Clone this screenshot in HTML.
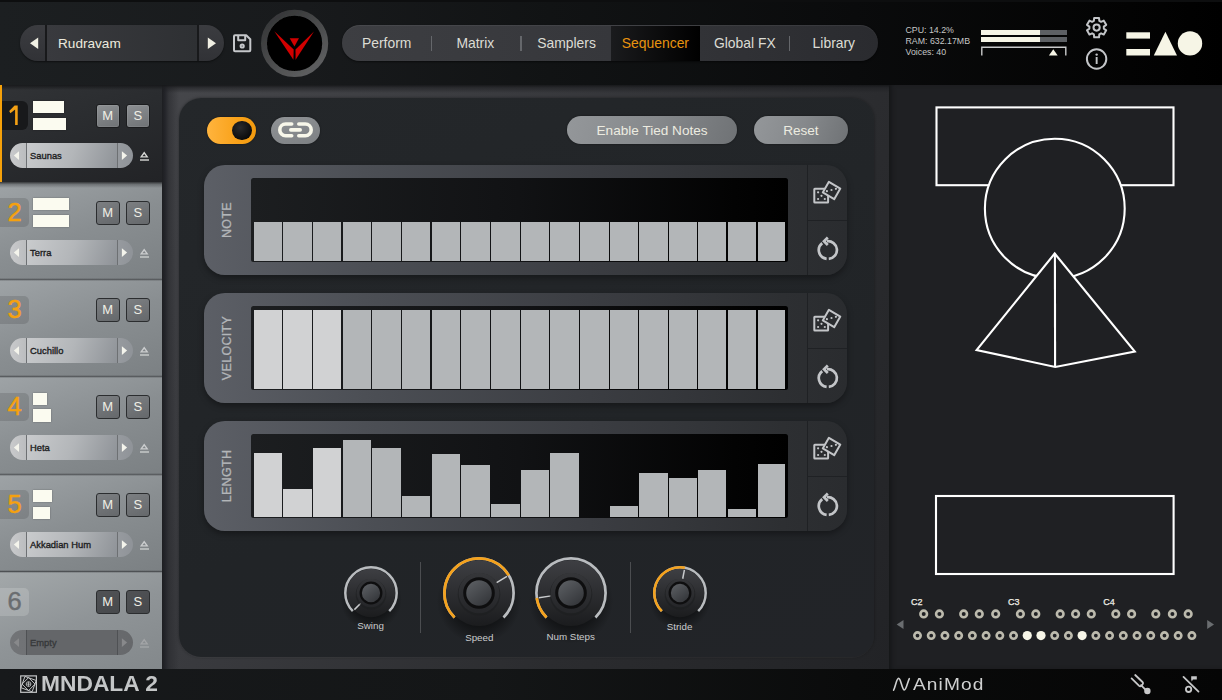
<!DOCTYPE html>
<html><head><meta charset="utf-8">
<style>
*{margin:0;padding:0;box-sizing:border-box}
html,body{width:1222px;height:700px;overflow:hidden;background:#111214;font-family:"Liberation Sans",sans-serif}
.a{position:absolute}
#hdr{left:0;top:0;width:1222px;height:85px;background:linear-gradient(90deg,#1c1f21 0%,#181a1c 25%,#111314 45%,#0a0b0c 70%,#040404 90%,#000 100%);border-top:2px solid #0d0e0f}
#side{left:0;top:85px;width:162px;height:584px;background:#8a8d90}
#sidesep{left:162px;top:85px;width:17px;height:584px;background:linear-gradient(90deg,#1d1e21 0%,#24252a 18%,rgba(40,41,45,.6) 40%,rgba(60,61,66,0) 100%)}
#main{left:162px;top:85px;width:727px;height:584px;background:linear-gradient(120deg,#46474b 0%,#3a3b3f 32%,#2b2c2f 68%,#222326 100%)}
#inner{left:179px;top:97.8px;width:694.8px;height:559.3px;border-radius:22px;background:linear-gradient(160deg,#24272a 0%,#212427 60%,#222428 100%);box-shadow:0 0 3px rgba(0,0,0,.4),0 1px 0 rgba(255,255,255,.05)}
#right{left:889px;top:85px;width:333px;height:584px;background:#1f2023;box-shadow:inset 4px 0 5px -2px #141517}
#foot{left:0;top:669px;width:1222px;height:31px;background:linear-gradient(90deg,#17191b 0%,#141617 40%,#0a0b0b 70%,#050505 100%)}
.nav{top:33px;height:20px;line-height:20px;font-size:13.9px;color:#dcdcd4;white-space:nowrap}
.stat{height:12px;line-height:12px;font-size:8.8px;color:#c6c7c6;white-space:nowrap}

.num{font-size:25.5px;line-height:30px;height:30px;-webkit-text-stroke:0.45px currentColor}
.cb{background:#fbfbf0;box-shadow:0 0 1.5px rgba(0,0,0,.35)}
.msb{width:24.5px;height:24px;border-radius:3px;color:#efefe6;font-size:13px;line-height:21px;text-align:center}
.pb{height:28.3px;border-radius:14px;background:linear-gradient(110deg,#94979a 0%,#86898c 50%,#6f7275 100%);box-shadow:0 0 2px rgba(0,0,0,.5);color:#ecebe0;font-size:13.6px;line-height:30px;text-align:center;white-space:nowrap}
.rowp{left:203.6px;width:643.2px;height:110px;border-radius:21px;background:linear-gradient(90deg,#5c5f66 0%,#4c4f55 25%,#3b3d42 60%,#2d2f32 90%,#2a2c2f 100%);box-shadow:0 3px 6px rgba(0,0,0,.35)}
.disp{left:250.7px;width:537.2px;height:83.5px;border-radius:2.5px;background:linear-gradient(90deg,#1c1e20 0%,#111214 50%,#030303 90%,#000 100%)}
.rl{height:14px;line-height:14px;text-align:center;font-size:12.5px;color:#b3b6b9;transform:rotate(-90deg);letter-spacing:.3px;-webkit-text-stroke:0.3px currentColor}
.kl{height:14px;line-height:14px;text-align:center;font-size:9.8px;color:#c9cbcc;white-space:nowrap}
.kb{height:12px;line-height:12px;font-size:9px;color:#f0efe6;-webkit-text-stroke:0.25px currentColor}
.pt{font-size:9.4px;line-height:13px;height:13px;white-space:nowrap;-webkit-text-stroke:0.35px currentColor}
</style></head><body>
<div id="hdr" class="a"></div>
<!-- preset pill -->
<div class="a" style="left:20px;top:25px;width:204px;height:36px;border-radius:18px;background:linear-gradient(180deg,#3b3c40 0%,#313236 100%);box-shadow:0 1px 2px rgba(0,0,0,.5)"></div>
<div class="a" style="left:45px;top:25px;width:2px;height:36px;background:#18191b"></div>
<div class="a" style="left:197px;top:25px;width:2px;height:36px;background:#18191b"></div>
<div class="a" style="left:47px;top:25px;width:150px;height:36px;background:linear-gradient(90deg,#393a3e,#2e3033)"></div>
<svg class="a" style="left:0;top:0" width="340" height="85"><polygon points="30,43.3 38.2,37.5 38.2,49" fill="#f0efe3"/><polygon points="216,43.3 207.8,37.5 207.8,49" fill="#f0efe3"/>
<g fill="none" stroke="#c5c7ca" stroke-width="2" stroke-linejoin="round"><path d="M235,35.2 H246.2 L250.3,39.3 V50.2 Q250.3,51.2 249.3,51.2 H235 Q234,51.2 234,50.2 V36.2 Q234,35.2 235,35.2 Z"/><path d="M238.2,35.2 V40.2 H245.2 V35.2"/><circle cx="242.2" cy="46" r="1.6"/></g>
<defs><linearGradient id="lgr" x1="0.2" y1="0.1" x2="0.8" y2="0.9"><stop offset="0" stop-color="#38393a"/><stop offset="1" stop-color="#5c5d5e"/></linearGradient><filter id="lbl" x="-20%" y="-20%" width="140%" height="140%"><feGaussianBlur stdDeviation="0.6"/></filter></defs><circle cx="294.6" cy="43.4" r="30.6" fill="#000" stroke="url(#lgr)" stroke-width="6" filter="url(#lbl)"/>
<polygon points="274.3,31.3 293.7,49.5 293.4,59.8" fill="#d20000"/><polygon points="314,31.5 295.5,49.5 295.6,59.8" fill="#d20000"/><polygon points="289.7,38.2 299,38.2 294.4,46.4" fill="#d20000"/>
</svg>
<div class="a" style="left:58px;top:34px;height:20px;line-height:20px;font-size:13.6px;color:#eceade">Rudravam</div>
<!-- nav -->
<div class="a" style="left:342px;top:25px;width:536px;height:35.5px;border-radius:18px;background:linear-gradient(90deg,#3d3e42 0%,#36373b 50%,#2a2b2f 100%);box-shadow:0 1px 2px rgba(0,0,0,.5), inset 0 1px 0 rgba(255,255,255,.06)"></div>
<div class="a" style="left:610.5px;top:26px;width:89.5px;height:34.5px;background:linear-gradient(90deg,#1a1b1d 0%,#0a0a0b 60%,#000 100%)"></div>
<div class="a" style="left:430.9px;top:35.5px;width:1.2px;height:15.5px;background:#65676b"></div>
<div class="a" style="left:520.4px;top:35.5px;width:1.2px;height:15.5px;background:#65676b"></div>
<div class="a" style="left:788.6px;top:35.5px;width:1.2px;height:15.5px;background:#65676b"></div>
<div class="a nav" style="left:362px">Perform</div>
<div class="a nav" style="left:456.4px">Matrix</div>
<div class="a nav" style="left:537.2px">Samplers</div>
<div class="a nav" style="left:621.8px;color:#e8930f">Sequencer</div>
<div class="a nav" style="left:713.9px">Global FX</div>
<div class="a nav" style="left:812.6px">Library</div>
<!-- stats -->
<div class="a stat" style="left:905.5px;top:24px">CPU: 14.2%</div>
<div class="a stat" style="left:905.5px;top:35px">RAM: 632.17MB</div>
<div class="a stat" style="left:905.5px;top:46px">Voices: 40</div>
<div class="a" style="left:981px;top:29.7px;width:59px;height:5.2px;background:#f6f5e6"></div>
<div class="a" style="left:1040px;top:29.7px;width:26.6px;height:5.2px;background:#5d6064"></div>
<div class="a" style="left:981px;top:37.1px;width:59px;height:5.1px;background:#f6f5e6"></div>
<div class="a" style="left:1040px;top:37.1px;width:26.6px;height:5.1px;background:#5d6064"></div>
<svg class="a" style="left:970px;top:40px" width="110" height="20"><path d="M11.8,15.5 V7.3 H95.8 V15.5" fill="none" stroke="#c9cacb" stroke-width="1.4"/><polygon points="78.9,15.5 83.3,9.2 87.7,15.5" fill="#f6f5e6"/></svg>
<svg class="a" style="left:1080px;top:10px" width="142" height="70">
<g fill="none" stroke="#c3c5c8" stroke-width="2"><circle cx="16.6" cy="49" r="9.7"/></g>
<rect x="15.7" y="47" width="1.9" height="7" fill="#c3c5c8"/><circle cx="16.65" cy="44.6" r="1.2" fill="#c3c5c8"/>
<circle cx="16.6" cy="17.6" r="3.1" fill="none" stroke="#c3c5c8" stroke-width="2"/><path id="gear" d="M13.87,10.83 L14.18,7.90 L19.02,7.90 L19.33,10.83 L21.09,11.85 L23.79,10.65 L26.21,14.84 L23.83,16.58 L23.83,18.62 L26.21,20.36 L23.79,24.55 L21.09,23.35 L19.33,24.37 L19.02,27.30 L14.18,27.30 L13.87,24.37 L12.11,23.35 L9.41,24.55 L6.99,20.36 L9.37,18.62 L9.37,16.58 L6.99,14.84 L9.41,10.65 L12.11,11.85Z" stroke-linejoin="round" fill="none" stroke="#c3c5c8" stroke-width="2"/>
<rect x="46.3" y="22.3" width="23.7" height="6.3" fill="#f6f5e6"/><rect x="46.3" y="39" width="23.7" height="6.5" fill="#f6f5e6"/>
<polygon points="73.8,45.5 85.4,21.8 97,45.5" fill="#f6f5e6"/><circle cx="110" cy="33.4" r="12.2" fill="#f6f5e6"/>
</svg>


<div class="a" style="left:0;top:85.0px;width:162px;height:97.30000000000001px;background:linear-gradient(160deg,#313336 0%,#2a2c2f 45%,#222326 100%)"></div>
<div class="a" style="left:0;top:85.0px;width:2.1px;height:97.30000000000001px;background:#f6a10a"></div>
<div class="a" style="left:2.1px;top:101.0px;width:26.4px;height:29px;border-radius:0 6px 6px 0;background:#18191b"></div>
<svg class="a" style="left:0;top:85.0px" width="30" height="50"><polygon points="14.6,20.5 17.7,20.5 17.7,40 15.1,40 15.1,24.6 10.4,28.2 9.2,26.1" fill="#f4a114"/></svg>
<div class="a cb" style="left:33px;top:101.0px;width:31px;height:12px"></div>
<div class="a cb" style="left:33px;top:117.5px;width:32.6px;height:12.5px"></div>
<div class="a msb" style="left:95.5px;top:103.5px;border:1.4px solid #1b1c1e;background:linear-gradient(160deg,#8d9093,#6f7275);box-shadow:inset 0 0 0 1px rgba(255,255,255,.08);">M</div>
<div class="a msb" style="left:125.5px;top:103.5px;border:1.4px solid #1b1c1e;background:linear-gradient(160deg,#8d9093,#6f7275);box-shadow:inset 0 0 0 1px rgba(255,255,255,.08);">S</div>
<div class="a" style="left:10px;top:143.0px;width:123.4px;height:25px;border-radius:12.5px;background:linear-gradient(90deg,#c9cacc 0%,#bcbec0 12%,#aeb1b4 50%,#8f9398 100%)"></div>
<div class="a" style="left:26.5px;top:143.0px;width:90.5px;height:25px;background:linear-gradient(110deg,#c9cbcd 0%,#b3b6b9 50%,#8e9297 100%)"></div>
<div class="a" style="left:25.5px;top:143.0px;width:1.5px;height:25px;background:#6d7073"></div>
<div class="a" style="left:116.5px;top:143.0px;width:1.5px;height:25px;background:#6d7073"></div>
<svg class="a" style="left:0;top:143.0px" width="162" height="25"><polygon points="13.8,12.6 19,8.2 19,17" fill="#f4f4ec"/><polygon points="127.1,12.6 121.9,8.2 121.9,17" fill="#f4f4ec"/><path d="M144.2,8.5 L139.9,14.5 L148.5,14.5 Z M144.2,11.1 L142.4,13.3 L146,13.3 Z" fill="#d8d9d6" fill-rule="evenodd"/><rect x="140" y="16.3" width="9" height="1.4" fill="#d8d9d6"/></svg>
<div class="a pt" style="left:30px;top:149.0px;color:#1d1e1f">Saunas</div>
<div class="a" style="left:0;top:182.3px;width:162px;height:97.30000000000001px;background:linear-gradient(160deg,#9ea3a6 0%,#898e91 50%,#7b8083 100%)"></div>
<div class="a" style="left:0;top:182.3px;width:162px;height:6px;background:linear-gradient(180deg,rgba(20,21,23,.75) 0%,rgba(40,42,45,.35) 40%,rgba(0,0,0,0) 100%)"></div>
<div class="a" style="left:0;top:198.3px;width:28.5px;height:28.5px;border-radius:0 5px 5px 0;background:rgba(0,0,0,.12)"></div>
<div class="a num" style="left:7.5px;top:196.8px;color:#f5a10f">2</div>
<div class="a cb" style="left:33px;top:198.3px;width:36px;height:12px"></div>
<div class="a cb" style="left:33px;top:214.8px;width:36px;height:12.5px"></div>
<div class="a msb" style="left:95.5px;top:200.8px;border:1.6px solid #2b2d2f;background:linear-gradient(160deg,#7c7f82,#65686b);">M</div>
<div class="a msb" style="left:125.5px;top:200.8px;border:1.6px solid #2b2d2f;background:linear-gradient(160deg,#7c7f82,#65686b);">S</div>
<div class="a" style="left:10px;top:240.3px;width:123.4px;height:25px;border-radius:12.5px;background:linear-gradient(90deg,#c9cacc 0%,#bcbec0 12%,#aeb1b4 50%,#8f9398 100%)"></div>
<div class="a" style="left:26.5px;top:240.3px;width:90.5px;height:25px;background:linear-gradient(110deg,#c9cbcd 0%,#b3b6b9 50%,#8e9297 100%)"></div>
<div class="a" style="left:25.5px;top:240.3px;width:1.5px;height:25px;background:#6d7073"></div>
<div class="a" style="left:116.5px;top:240.3px;width:1.5px;height:25px;background:#6d7073"></div>
<svg class="a" style="left:0;top:240.3px" width="162" height="25"><polygon points="13.8,12.6 19,8.2 19,17" fill="#f4f4ec"/><polygon points="127.1,12.6 121.9,8.2 121.9,17" fill="#f4f4ec"/><path d="M144.2,8.5 L139.9,14.5 L148.5,14.5 Z M144.2,11.1 L142.4,13.3 L146,13.3 Z" fill="#cbcdce" fill-rule="evenodd"/><rect x="140" y="16.3" width="9" height="1.4" fill="#cbcdce"/></svg>
<div class="a pt" style="left:30px;top:246.3px;color:#1d1e1f">Terra</div>
<div class="a" style="left:0;top:279.6px;width:162px;height:97.29999999999995px;background:linear-gradient(160deg,#9ea3a6 0%,#898e91 50%,#7b8083 100%)"></div>
<div class="a" style="left:0;top:278.1px;width:162px;height:3px;background:linear-gradient(180deg,rgba(80,84,87,0) 0%,rgba(85,88,91,.9) 50%,rgba(80,84,87,0) 100%)"></div>
<div class="a" style="left:0;top:295.6px;width:28.5px;height:28.5px;border-radius:0 5px 5px 0;background:rgba(0,0,0,.12)"></div>
<div class="a num" style="left:7.5px;top:294.1px;color:#f5a10f">3</div>
<div class="a msb" style="left:95.5px;top:298.1px;border:1.6px solid #2b2d2f;background:linear-gradient(160deg,#7c7f82,#65686b);">M</div>
<div class="a msb" style="left:125.5px;top:298.1px;border:1.6px solid #2b2d2f;background:linear-gradient(160deg,#7c7f82,#65686b);">S</div>
<div class="a" style="left:10px;top:337.6px;width:123.4px;height:25px;border-radius:12.5px;background:linear-gradient(90deg,#c9cacc 0%,#bcbec0 12%,#aeb1b4 50%,#8f9398 100%)"></div>
<div class="a" style="left:26.5px;top:337.6px;width:90.5px;height:25px;background:linear-gradient(110deg,#c9cbcd 0%,#b3b6b9 50%,#8e9297 100%)"></div>
<div class="a" style="left:25.5px;top:337.6px;width:1.5px;height:25px;background:#6d7073"></div>
<div class="a" style="left:116.5px;top:337.6px;width:1.5px;height:25px;background:#6d7073"></div>
<svg class="a" style="left:0;top:337.6px" width="162" height="25"><polygon points="13.8,12.6 19,8.2 19,17" fill="#f4f4ec"/><polygon points="127.1,12.6 121.9,8.2 121.9,17" fill="#f4f4ec"/><path d="M144.2,8.5 L139.9,14.5 L148.5,14.5 Z M144.2,11.1 L142.4,13.3 L146,13.3 Z" fill="#cbcdce" fill-rule="evenodd"/><rect x="140" y="16.3" width="9" height="1.4" fill="#cbcdce"/></svg>
<div class="a pt" style="left:30px;top:343.6px;color:#1d1e1f">Cuchillo</div>
<div class="a" style="left:0;top:376.9px;width:162px;height:97.30000000000001px;background:linear-gradient(160deg,#9ea3a6 0%,#898e91 50%,#7b8083 100%)"></div>
<div class="a" style="left:0;top:375.4px;width:162px;height:3px;background:linear-gradient(180deg,rgba(80,84,87,0) 0%,rgba(85,88,91,.9) 50%,rgba(80,84,87,0) 100%)"></div>
<div class="a" style="left:0;top:392.9px;width:28.5px;height:28.5px;border-radius:0 5px 5px 0;background:rgba(0,0,0,.12)"></div>
<div class="a num" style="left:7.5px;top:391.4px;color:#f5a10f">4</div>
<div class="a cb" style="left:33px;top:392.9px;width:14px;height:12px"></div>
<div class="a cb" style="left:33px;top:409.4px;width:17.7px;height:12.5px"></div>
<div class="a msb" style="left:95.5px;top:395.4px;border:1.6px solid #2b2d2f;background:linear-gradient(160deg,#7c7f82,#65686b);">M</div>
<div class="a msb" style="left:125.5px;top:395.4px;border:1.6px solid #2b2d2f;background:linear-gradient(160deg,#7c7f82,#65686b);">S</div>
<div class="a" style="left:10px;top:434.9px;width:123.4px;height:25px;border-radius:12.5px;background:linear-gradient(90deg,#c9cacc 0%,#bcbec0 12%,#aeb1b4 50%,#8f9398 100%)"></div>
<div class="a" style="left:26.5px;top:434.9px;width:90.5px;height:25px;background:linear-gradient(110deg,#c9cbcd 0%,#b3b6b9 50%,#8e9297 100%)"></div>
<div class="a" style="left:25.5px;top:434.9px;width:1.5px;height:25px;background:#6d7073"></div>
<div class="a" style="left:116.5px;top:434.9px;width:1.5px;height:25px;background:#6d7073"></div>
<svg class="a" style="left:0;top:434.9px" width="162" height="25"><polygon points="13.8,12.6 19,8.2 19,17" fill="#f4f4ec"/><polygon points="127.1,12.6 121.9,8.2 121.9,17" fill="#f4f4ec"/><path d="M144.2,8.5 L139.9,14.5 L148.5,14.5 Z M144.2,11.1 L142.4,13.3 L146,13.3 Z" fill="#cbcdce" fill-rule="evenodd"/><rect x="140" y="16.3" width="9" height="1.4" fill="#cbcdce"/></svg>
<div class="a pt" style="left:30px;top:440.9px;color:#1d1e1f">Heta</div>
<div class="a" style="left:0;top:474.2px;width:162px;height:97.30000000000001px;background:linear-gradient(160deg,#9ea3a6 0%,#898e91 50%,#7b8083 100%)"></div>
<div class="a" style="left:0;top:472.7px;width:162px;height:3px;background:linear-gradient(180deg,rgba(80,84,87,0) 0%,rgba(85,88,91,.9) 50%,rgba(80,84,87,0) 100%)"></div>
<div class="a" style="left:0;top:490.2px;width:28.5px;height:28.5px;border-radius:0 5px 5px 0;background:rgba(0,0,0,.12)"></div>
<div class="a num" style="left:7.5px;top:488.7px;color:#f5a10f">5</div>
<div class="a cb" style="left:33px;top:490.2px;width:19.1px;height:12px"></div>
<div class="a cb" style="left:33px;top:506.7px;width:17.4px;height:12.5px"></div>
<div class="a msb" style="left:95.5px;top:492.7px;border:1.6px solid #2b2d2f;background:linear-gradient(160deg,#7c7f82,#65686b);">M</div>
<div class="a msb" style="left:125.5px;top:492.7px;border:1.6px solid #2b2d2f;background:linear-gradient(160deg,#7c7f82,#65686b);">S</div>
<div class="a" style="left:10px;top:532.2px;width:123.4px;height:25px;border-radius:12.5px;background:linear-gradient(90deg,#c9cacc 0%,#bcbec0 12%,#aeb1b4 50%,#8f9398 100%)"></div>
<div class="a" style="left:26.5px;top:532.2px;width:90.5px;height:25px;background:linear-gradient(110deg,#c9cbcd 0%,#b3b6b9 50%,#8e9297 100%)"></div>
<div class="a" style="left:25.5px;top:532.2px;width:1.5px;height:25px;background:#6d7073"></div>
<div class="a" style="left:116.5px;top:532.2px;width:1.5px;height:25px;background:#6d7073"></div>
<svg class="a" style="left:0;top:532.2px" width="162" height="25"><polygon points="13.8,12.6 19,8.2 19,17" fill="#f4f4ec"/><polygon points="127.1,12.6 121.9,8.2 121.9,17" fill="#f4f4ec"/><path d="M144.2,8.5 L139.9,14.5 L148.5,14.5 Z M144.2,11.1 L142.4,13.3 L146,13.3 Z" fill="#cbcdce" fill-rule="evenodd"/><rect x="140" y="16.3" width="9" height="1.4" fill="#cbcdce"/></svg>
<div class="a pt" style="left:30px;top:538.2px;color:#1d1e1f">Akkadian Hum</div>
<div class="a" style="left:0;top:571.5px;width:162px;height:97.29999999999995px;background:linear-gradient(160deg,#a3a8aa 0%,#8f9497 50%,#83888b 100%)"></div>
<div class="a" style="left:0;top:570.0px;width:162px;height:3px;background:linear-gradient(180deg,rgba(80,84,87,0) 0%,rgba(85,88,91,.9) 50%,rgba(80,84,87,0) 100%)"></div>
<div class="a" style="left:0;top:587.5px;width:28.7px;height:28.5px;border-radius:0 5px 5px 0;background:rgba(255,255,255,.16)"></div>
<div class="a num" style="left:7.5px;top:586.0px;color:#6a6d70">6</div>
<div class="a msb" style="left:95.5px;top:590.0px;border:1.6px solid #2b2d2f;background:linear-gradient(160deg,#505255,#47494c);">M</div>
<div class="a msb" style="left:125.5px;top:590.0px;border:1.6px solid #2b2d2f;background:linear-gradient(160deg,#505255,#47494c);">S</div>
<div class="a" style="left:10px;top:629.5px;width:123.4px;height:25px;border-radius:12.5px;background:linear-gradient(90deg,#727477,#66686b)"></div>
<div class="a" style="left:25.5px;top:629.5px;width:91.5px;height:25px;background:#646669"></div>
<div class="a" style="left:25.5px;top:629.5px;width:1.5px;height:25px;background:#4f5154"></div>
<div class="a" style="left:116.5px;top:629.5px;width:1.5px;height:25px;background:#4f5154"></div>
<svg class="a" style="left:0;top:629.5px" width="162" height="25"><polygon points="13.8,12.6 19,8.2 19,17" fill="#88898b"/><polygon points="127.1,12.6 121.9,8.2 121.9,17" fill="#88898b"/><path d="M144.2,8.5 L139.9,14.5 L148.5,14.5 Z M144.2,11.1 L142.4,13.3 L146,13.3 Z" fill="#a3a5a7" fill-rule="evenodd"/><rect x="140" y="16.3" width="9" height="1.4" fill="#a3a5a7"/></svg>
<div class="a pt" style="left:30px;top:635.5px;color:#37393b">Empty</div>
<div id="main" class="a"></div>
<div id="sidesep" class="a"></div>
<div class="a" style="left:2.1px;top:85px;width:160px;height:5px;background:linear-gradient(180deg,rgba(18,19,21,.8) 0%,rgba(30,31,34,0) 100%)"></div>
<div class="a" style="left:162px;top:85px;width:727px;height:8px;background:linear-gradient(180deg,rgba(22,23,25,.95) 0%,rgba(30,31,34,.6) 35%,rgba(40,41,45,0) 100%)"></div>
<div id="inner" class="a"></div>
<div class="a" style="left:206.5px;top:116.5px;width:49.2px;height:27px;border-radius:13.5px;background:linear-gradient(90deg,#ffb43e 0%,#f9a21a 60%,#f29a0e 100%);box-shadow:0 0 2px rgba(0,0,0,.5)"></div>
<div class="a" style="left:232.2px;top:120.5px;width:19.6px;height:19.3px;border-radius:50%;background:radial-gradient(circle at 40% 35%,#2a2b2d 0%,#0c0c0d 70%,#000 100%)"></div>
<div class="a" style="left:270.8px;top:116.5px;width:49.2px;height:27px;border-radius:13.5px;background:linear-gradient(160deg,#909396 0%,#7d8083 100%);box-shadow:0 0 2px rgba(0,0,0,.5)"></div>
<svg class="a" style="left:270px;top:110px" width="60" height="40"><g fill="none" stroke="#f8f7ea" stroke-width="3.6" stroke-linecap="round"><path d="M21.7,14 H15.7 A5.9,5.9 0 0 0 15.7,25.8 H21.7"/><path d="M28.8,14 H35.3 A5.9,5.9 0 0 1 35.3,25.8 H28.8"/><path d="M20.8,19.9 H30.2"/></g></svg>
<div class="a pb" style="left:567.4px;top:116px;width:169.4px">Enable Tied Notes</div>
<div class="a pb" style="left:754px;top:116px;width:93.8px">Reset</div>
<div class="a rowp" style="top:165px"></div>
<div class="a" style="left:807px;top:165px;width:1px;height:110px;background:#1f2124"></div>
<div class="a" style="left:808px;top:219.5px;width:38.5px;height:1px;background:#1f2124"></div>
<div class="a disp" style="top:178px"></div>
<div class="a rl" style="left:187.2px;top:213px;width:80px">NOTE</div>
<div class="a" style="left:253.7px;top:221.6px;width:28.4px;height:39.4px;background:#b3b6b8"></div>
<div class="a" style="left:283px;top:221.6px;width:28.9px;height:39.4px;background:#b3b6b8"></div>
<div class="a" style="left:313px;top:221.6px;width:28.2px;height:39.4px;background:#b3b6b8"></div>
<div class="a" style="left:343px;top:221.6px;width:28.0px;height:39.4px;background:#b3b6b8"></div>
<div class="a" style="left:372.2px;top:221.6px;width:29.1px;height:39.4px;background:#b3b6b8"></div>
<div class="a" style="left:402px;top:221.6px;width:28.2px;height:39.4px;background:#b3b6b8"></div>
<div class="a" style="left:431.8px;top:221.6px;width:28.2px;height:39.4px;background:#b3b6b8"></div>
<div class="a" style="left:461px;top:221.6px;width:28.7px;height:39.4px;background:#b3b6b8"></div>
<div class="a" style="left:490.9px;top:221.6px;width:29.1px;height:39.4px;background:#b3b6b8"></div>
<div class="a" style="left:520.7px;top:221.6px;width:28.2px;height:39.4px;background:#b3b6b8"></div>
<div class="a" style="left:549.8px;top:221.6px;width:28.9px;height:39.4px;background:#b3b6b8"></div>
<div class="a" style="left:579.5px;top:221.6px;width:29.0px;height:39.4px;background:#b3b6b8"></div>
<div class="a" style="left:610.1px;top:221.6px;width:27.5px;height:39.4px;background:#b3b6b8"></div>
<div class="a" style="left:638.7px;top:221.6px;width:29.1px;height:39.4px;background:#b3b6b8"></div>
<div class="a" style="left:669px;top:221.6px;width:27.5px;height:39.4px;background:#b3b6b8"></div>
<div class="a" style="left:697.9px;top:221.6px;width:28.4px;height:39.4px;background:#b3b6b8"></div>
<div class="a" style="left:727.6px;top:221.6px;width:28.4px;height:39.4px;background:#b3b6b8"></div>
<div class="a" style="left:757.9px;top:221.6px;width:27.5px;height:39.4px;background:#b3b6b8"></div>
<svg class="a" style="left:800px;top:165px" width="50" height="110"><g fill="none" stroke="#c3c5c8" stroke-width="2"><rect x="14.3" y="23.8" width="13.8" height="13.6" rx="0.5"/></g><g fill="#c3c5c8"><circle cx="18.1" cy="27.3" r="1.1"/><circle cx="21.5" cy="30.8" r="1.1"/><circle cx="18.1" cy="34" r="1.1"/><circle cx="24.8" cy="34" r="1.1"/></g><polygon points="28.9,16.8 40.3,23.6 34.2,34.2 22.8,27.4" fill="#2a2c2f" stroke="#c3c5c8" stroke-width="2" stroke-linejoin="round"/><g fill="#c3c5c8"><circle cx="26.9" cy="26.2" r="1.1"/><circle cx="31.5" cy="25" r="1.1"/><circle cx="35.9" cy="23.8" r="1.1"/></g><g fill="none" stroke="#c3c5c8" stroke-width="2.7"><path d="M26.62,93.93 A8.9,8.9 0 0 1 22.22,78.09"/><path d="M28.78,93.93 A8.9,8.9 0 1 0 26.92,76.23"/><path d="M27.8,72.5 L24,76.2 L27.8,80" stroke-linejoin="miter" stroke-linecap="butt"/></g></svg>
<div class="a rowp" style="top:293px"></div>
<div class="a" style="left:807px;top:293px;width:1px;height:110px;background:#1f2124"></div>
<div class="a" style="left:808px;top:347.5px;width:38.5px;height:1px;background:#1f2124"></div>
<div class="a disp" style="top:306px"></div>
<div class="a rl" style="left:187.2px;top:341px;width:80px">VELOCITY</div>
<div class="a" style="left:253.7px;top:309.7px;width:28.4px;height:79.3px;background:#d1d2d3"></div>
<div class="a" style="left:283px;top:309.7px;width:28.9px;height:79.3px;background:#d1d2d3"></div>
<div class="a" style="left:313px;top:309.7px;width:28.2px;height:79.3px;background:#d1d2d3"></div>
<div class="a" style="left:343px;top:309.7px;width:28.0px;height:79.3px;background:#b3b6b8"></div>
<div class="a" style="left:372.2px;top:309.7px;width:29.1px;height:79.3px;background:#b3b6b8"></div>
<div class="a" style="left:402px;top:309.7px;width:28.2px;height:79.3px;background:#b3b6b8"></div>
<div class="a" style="left:431.8px;top:309.7px;width:28.2px;height:79.3px;background:#b3b6b8"></div>
<div class="a" style="left:461px;top:309.7px;width:28.7px;height:79.3px;background:#b3b6b8"></div>
<div class="a" style="left:490.9px;top:309.7px;width:29.1px;height:79.3px;background:#b3b6b8"></div>
<div class="a" style="left:520.7px;top:309.7px;width:28.2px;height:79.3px;background:#b3b6b8"></div>
<div class="a" style="left:549.8px;top:309.7px;width:28.9px;height:79.3px;background:#b3b6b8"></div>
<div class="a" style="left:579.5px;top:309.7px;width:29.0px;height:79.3px;background:#b3b6b8"></div>
<div class="a" style="left:610.1px;top:309.7px;width:27.5px;height:79.3px;background:#b3b6b8"></div>
<div class="a" style="left:638.7px;top:309.7px;width:29.1px;height:79.3px;background:#b3b6b8"></div>
<div class="a" style="left:669px;top:309.7px;width:27.5px;height:79.3px;background:#b3b6b8"></div>
<div class="a" style="left:697.9px;top:309.7px;width:28.4px;height:79.3px;background:#b3b6b8"></div>
<div class="a" style="left:727.6px;top:309.7px;width:28.4px;height:79.3px;background:#b3b6b8"></div>
<div class="a" style="left:757.9px;top:309.7px;width:27.5px;height:79.3px;background:#b3b6b8"></div>
<svg class="a" style="left:800px;top:293px" width="50" height="110"><g fill="none" stroke="#c3c5c8" stroke-width="2"><rect x="14.3" y="23.8" width="13.8" height="13.6" rx="0.5"/></g><g fill="#c3c5c8"><circle cx="18.1" cy="27.3" r="1.1"/><circle cx="21.5" cy="30.8" r="1.1"/><circle cx="18.1" cy="34" r="1.1"/><circle cx="24.8" cy="34" r="1.1"/></g><polygon points="28.9,16.8 40.3,23.6 34.2,34.2 22.8,27.4" fill="#2a2c2f" stroke="#c3c5c8" stroke-width="2" stroke-linejoin="round"/><g fill="#c3c5c8"><circle cx="26.9" cy="26.2" r="1.1"/><circle cx="31.5" cy="25" r="1.1"/><circle cx="35.9" cy="23.8" r="1.1"/></g><g fill="none" stroke="#c3c5c8" stroke-width="2.7"><path d="M26.62,93.93 A8.9,8.9 0 0 1 22.22,78.09"/><path d="M28.78,93.93 A8.9,8.9 0 1 0 26.92,76.23"/><path d="M27.8,72.5 L24,76.2 L27.8,80" stroke-linejoin="miter" stroke-linecap="butt"/></g></svg>
<div class="a rowp" style="top:421px"></div>
<div class="a" style="left:807px;top:421px;width:1px;height:110px;background:#1f2124"></div>
<div class="a" style="left:808px;top:475.5px;width:38.5px;height:1px;background:#1f2124"></div>
<div class="a disp" style="top:434px"></div>
<div class="a rl" style="left:187.2px;top:469px;width:80px">LENGTH</div>
<div class="a" style="left:253.7px;top:453px;width:28.4px;height:64.0px;background:#d1d2d3"></div>
<div class="a" style="left:283px;top:489.2px;width:28.9px;height:27.8px;background:#d1d2d3"></div>
<div class="a" style="left:313px;top:447.5px;width:28.2px;height:69.5px;background:#d1d2d3"></div>
<div class="a" style="left:343px;top:439.9px;width:28.0px;height:77.1px;background:#b3b6b8"></div>
<div class="a" style="left:372.2px;top:448.4px;width:29.1px;height:68.6px;background:#b3b6b8"></div>
<div class="a" style="left:402px;top:495.6px;width:28.2px;height:21.4px;background:#b3b6b8"></div>
<div class="a" style="left:431.8px;top:453.6px;width:28.2px;height:63.4px;background:#b3b6b8"></div>
<div class="a" style="left:461px;top:464.6px;width:28.7px;height:52.4px;background:#b3b6b8"></div>
<div class="a" style="left:490.9px;top:504.3px;width:29.1px;height:12.7px;background:#b3b6b8"></div>
<div class="a" style="left:520.7px;top:469.7px;width:28.2px;height:47.3px;background:#b3b6b8"></div>
<div class="a" style="left:549.8px;top:452.5px;width:28.9px;height:64.5px;background:#b3b6b8"></div>
<div class="a" style="left:610.1px;top:505.7px;width:27.5px;height:11.3px;background:#b3b6b8"></div>
<div class="a" style="left:638.7px;top:472.7px;width:29.1px;height:44.3px;background:#b3b6b8"></div>
<div class="a" style="left:669px;top:478.4px;width:27.5px;height:38.6px;background:#b3b6b8"></div>
<div class="a" style="left:697.9px;top:469.7px;width:28.4px;height:47.3px;background:#b3b6b8"></div>
<div class="a" style="left:727.6px;top:508.6px;width:28.4px;height:8.4px;background:#b3b6b8"></div>
<div class="a" style="left:757.9px;top:464.4px;width:27.5px;height:52.6px;background:#b3b6b8"></div>
<svg class="a" style="left:800px;top:421px" width="50" height="110"><g fill="none" stroke="#c3c5c8" stroke-width="2"><rect x="14.3" y="23.8" width="13.8" height="13.6" rx="0.5"/></g><g fill="#c3c5c8"><circle cx="18.1" cy="27.3" r="1.1"/><circle cx="21.5" cy="30.8" r="1.1"/><circle cx="18.1" cy="34" r="1.1"/><circle cx="24.8" cy="34" r="1.1"/></g><polygon points="28.9,16.8 40.3,23.6 34.2,34.2 22.8,27.4" fill="#2a2c2f" stroke="#c3c5c8" stroke-width="2" stroke-linejoin="round"/><g fill="#c3c5c8"><circle cx="26.9" cy="26.2" r="1.1"/><circle cx="31.5" cy="25" r="1.1"/><circle cx="35.9" cy="23.8" r="1.1"/></g><g fill="none" stroke="#c3c5c8" stroke-width="2.7"><path d="M26.62,93.93 A8.9,8.9 0 0 1 22.22,78.09"/><path d="M28.78,93.93 A8.9,8.9 0 1 0 26.92,76.23"/><path d="M27.8,72.5 L24,76.2 L27.8,80" stroke-linejoin="miter" stroke-linecap="butt"/></g></svg>
<svg class="a" style="left:320.5px;top:543.4px;overflow:visible" width="100" height="100"><defs><linearGradient id="kbSwing" x1="0" y1="0" x2="0" y2="1"><stop offset="0" stop-color="#3e3f43"/><stop offset="1" stop-color="#1b1c1e"/></linearGradient><linearGradient id="kcSwing" x1="0.2" y1="0.1" x2="0.8" y2="0.9"><stop offset="0" stop-color="#5a5d61"/><stop offset="1" stop-color="#34363a"/></linearGradient><radialGradient id="ksSwing"><stop offset="0.6" stop-color="#000" stop-opacity=".45"/><stop offset="1" stop-color="#000" stop-opacity="0"/></radialGradient><linearGradient id="krSwing" x1="0" y1="0" x2="0" y2="1"><stop offset="0" stop-color="#353639"/><stop offset="1" stop-color="#252629"/></linearGradient></defs><circle cx="50" cy="56.05" r="30.976" fill="url(#ksSwing)"/><circle cx="50" cy="50" r="24.2" fill="url(#kbSwing)"/><path d="M31.83,68.17 A25.7,25.7 0 1 1 68.17,68.17" fill="none" stroke="#b9bcbf" stroke-width="2.5"/><line x1="39.75" y1="60.25" x2="33.38" y2="66.62" stroke="#c9cbcd" stroke-width="1.5"/><circle cx="50" cy="51.2" r="15.3" fill="#1d1e20" opacity=".6"/><circle cx="50" cy="50" r="14.3" fill="url(#krSwing)"/><circle cx="50" cy="50" r="10.3" fill="url(#kcSwing)" stroke="#0e0e0f" stroke-width="2.3"/></svg>
<div class="a kl" style="left:330.5px;top:618.8px;width:80px">Swing</div>
<svg class="a" style="left:429.3px;top:542.7px;overflow:visible" width="100" height="100"><defs><linearGradient id="kbSpeed" x1="0" y1="0" x2="0" y2="1"><stop offset="0" stop-color="#3e3f43"/><stop offset="1" stop-color="#1b1c1e"/></linearGradient><linearGradient id="kcSpeed" x1="0.2" y1="0.1" x2="0.8" y2="0.9"><stop offset="0" stop-color="#5a5d61"/><stop offset="1" stop-color="#34363a"/></linearGradient><radialGradient id="ksSpeed"><stop offset="0.6" stop-color="#000" stop-opacity=".45"/><stop offset="1" stop-color="#000" stop-opacity="0"/></radialGradient><linearGradient id="krSpeed" x1="0" y1="0" x2="0" y2="1"><stop offset="0" stop-color="#353639"/><stop offset="1" stop-color="#252629"/></linearGradient></defs><circle cx="50" cy="58.25" r="42.24" fill="url(#ksSpeed)"/><circle cx="50" cy="50" r="33" fill="url(#kbSpeed)"/><path d="M25.53,74.47 A34.6,34.6 0 1 1 74.47,74.47" fill="none" stroke="#b9bcbf" stroke-width="2.7"/><path d="M25.53,74.47 A34.6,34.6 0 1 1 79.78,32.39" fill="none" stroke="#f5a21c" stroke-width="2.7"/><line x1="67.21" y1="39.82" x2="77.97" y2="33.46" stroke="#c9cbcd" stroke-width="1.5"/><circle cx="50" cy="51.2" r="21.3" fill="#1d1e20" opacity=".6"/><circle cx="50" cy="50" r="20.3" fill="url(#krSpeed)"/><circle cx="50" cy="50" r="14.3" fill="url(#kcSpeed)" stroke="#0e0e0f" stroke-width="3"/></svg>
<div class="a kl" style="left:439.3px;top:631.3px;width:80px">Speed</div>
<svg class="a" style="left:520.7px;top:542.5px;overflow:visible" width="100" height="100"><defs><linearGradient id="kbNumSteps" x1="0" y1="0" x2="0" y2="1"><stop offset="0" stop-color="#3e3f43"/><stop offset="1" stop-color="#1b1c1e"/></linearGradient><linearGradient id="kcNumSteps" x1="0.2" y1="0.1" x2="0.8" y2="0.9"><stop offset="0" stop-color="#5a5d61"/><stop offset="1" stop-color="#34363a"/></linearGradient><radialGradient id="ksNumSteps"><stop offset="0.6" stop-color="#000" stop-opacity=".45"/><stop offset="1" stop-color="#000" stop-opacity="0"/></radialGradient><linearGradient id="krNumSteps" x1="0" y1="0" x2="0" y2="1"><stop offset="0" stop-color="#353639"/><stop offset="1" stop-color="#252629"/></linearGradient></defs><circle cx="50" cy="58.25" r="42.24" fill="url(#ksNumSteps)"/><circle cx="50" cy="50" r="33" fill="url(#kbNumSteps)"/><path d="M25.53,74.47 A34.6,34.6 0 1 1 74.47,74.47" fill="none" stroke="#b9bcbf" stroke-width="2.7"/><path d="M25.53,74.47 A34.6,34.6 0 0 1 15.76,54.98" fill="none" stroke="#f5a21c" stroke-width="2.7"/><line x1="30.21" y1="52.88" x2="17.84" y2="54.68" stroke="#c9cbcd" stroke-width="1.5"/><circle cx="50" cy="51.2" r="21.3" fill="#1d1e20" opacity=".6"/><circle cx="50" cy="50" r="20.3" fill="url(#krNumSteps)"/><circle cx="50" cy="50" r="14.3" fill="url(#kcNumSteps)" stroke="#0e0e0f" stroke-width="3"/></svg>
<div class="a kl" style="left:530.7px;top:629.8px;width:80px">Num Steps</div>
<svg class="a" style="left:629.6px;top:542.8px;overflow:visible" width="100" height="100"><defs><linearGradient id="kbStride" x1="0" y1="0" x2="0" y2="1"><stop offset="0" stop-color="#3e3f43"/><stop offset="1" stop-color="#1b1c1e"/></linearGradient><linearGradient id="kcStride" x1="0.2" y1="0.1" x2="0.8" y2="0.9"><stop offset="0" stop-color="#5a5d61"/><stop offset="1" stop-color="#34363a"/></linearGradient><radialGradient id="ksStride"><stop offset="0.6" stop-color="#000" stop-opacity=".45"/><stop offset="1" stop-color="#000" stop-opacity="0"/></radialGradient><linearGradient id="krStride" x1="0" y1="0" x2="0" y2="1"><stop offset="0" stop-color="#353639"/><stop offset="1" stop-color="#252629"/></linearGradient></defs><circle cx="50" cy="56.05" r="30.976" fill="url(#ksStride)"/><circle cx="50" cy="50" r="24.2" fill="url(#kbStride)"/><path d="M31.83,68.17 A25.7,25.7 0 1 1 68.17,68.17" fill="none" stroke="#b9bcbf" stroke-width="2.5"/><path d="M31.83,68.17 A25.7,25.7 0 0 1 54.82,24.76" fill="none" stroke="#f5a21c" stroke-width="2.5"/><line x1="52.72" y1="35.76" x2="54.40" y2="26.92" stroke="#c9cbcd" stroke-width="1.5"/><circle cx="50" cy="51.2" r="15.3" fill="#1d1e20" opacity=".6"/><circle cx="50" cy="50" r="14.3" fill="url(#krStride)"/><circle cx="50" cy="50" r="10.3" fill="url(#kcStride)" stroke="#0e0e0f" stroke-width="2.3"/></svg>
<div class="a kl" style="left:639.6px;top:620.2px;width:80px">Stride</div>
<div class="a" style="left:419.7px;top:562px;width:1.4px;height:70.5px;background:#4b4d50"></div>
<div class="a" style="left:629.8px;top:562px;width:1.4px;height:70.5px;background:#4b4d50"></div>
<div id="right" class="a"></div>
<svg class="a" style="left:889px;top:85px" width="333" height="584"><g fill="#1f2023" stroke="#ffffff" stroke-width="2.1"><rect x="47.5" y="22.400000000000006" width="237" height="77.8"/><circle cx="165.79999999999995" cy="123.6" r="69.9"/><polygon points="165.70000000000005,168.5 87.60000000000002,265 166.29999999999995,282 245.79999999999995,266.5" stroke-linejoin="miter"/><line x1="165.9000000000001" y1="168.5" x2="166.0999999999999" y2="282"/><rect x="47" y="411" width="237.6" height="78"/></g><circle cx="34.70" cy="528.9" r="3.3" fill="none" stroke="#bcbaad" stroke-width="2.6"/><circle cx="50.40" cy="528.9" r="3.3" fill="none" stroke="#bcbaad" stroke-width="2.6"/><circle cx="74.70" cy="528.9" r="3.3" fill="none" stroke="#bcbaad" stroke-width="2.6"/><circle cx="90.30" cy="528.9" r="3.3" fill="none" stroke="#bcbaad" stroke-width="2.6"/><circle cx="106.70" cy="528.9" r="3.3" fill="none" stroke="#bcbaad" stroke-width="2.6"/><circle cx="131.40" cy="528.9" r="3.3" fill="none" stroke="#bcbaad" stroke-width="2.6"/><circle cx="146.80" cy="528.9" r="3.3" fill="none" stroke="#bcbaad" stroke-width="2.6"/><circle cx="171.20" cy="528.9" r="3.3" fill="none" stroke="#bcbaad" stroke-width="2.6"/><circle cx="186.60" cy="528.9" r="3.3" fill="none" stroke="#bcbaad" stroke-width="2.6"/><circle cx="202.30" cy="528.9" r="3.3" fill="none" stroke="#bcbaad" stroke-width="2.6"/><circle cx="226.80" cy="528.9" r="3.3" fill="none" stroke="#bcbaad" stroke-width="2.6"/><circle cx="242.60" cy="528.9" r="3.3" fill="none" stroke="#bcbaad" stroke-width="2.6"/><circle cx="266.80" cy="528.9" r="3.3" fill="none" stroke="#bcbaad" stroke-width="2.6"/><circle cx="283.40" cy="528.9" r="3.3" fill="none" stroke="#bcbaad" stroke-width="2.6"/><circle cx="299.20" cy="528.9" r="3.3" fill="none" stroke="#bcbaad" stroke-width="2.6"/><circle cx="28.50" cy="550.6" r="3.2" fill="none" stroke="#bcbaad" stroke-width="2.6"/><circle cx="42.22" cy="550.6" r="3.2" fill="none" stroke="#bcbaad" stroke-width="2.6"/><circle cx="55.94" cy="550.6" r="3.2" fill="none" stroke="#bcbaad" stroke-width="2.6"/><circle cx="69.66" cy="550.6" r="3.2" fill="none" stroke="#bcbaad" stroke-width="2.6"/><circle cx="83.38" cy="550.6" r="3.2" fill="none" stroke="#bcbaad" stroke-width="2.6"/><circle cx="97.10" cy="550.6" r="3.2" fill="none" stroke="#bcbaad" stroke-width="2.6"/><circle cx="110.82" cy="550.6" r="3.2" fill="none" stroke="#bcbaad" stroke-width="2.6"/><circle cx="124.54" cy="550.6" r="3.2" fill="none" stroke="#bcbaad" stroke-width="2.6"/><circle cx="138.26" cy="550.6" r="4.6" fill="#f7f6e8"/><circle cx="151.98" cy="550.6" r="4.6" fill="#f7f6e8"/><circle cx="165.70" cy="550.6" r="3.2" fill="none" stroke="#bcbaad" stroke-width="2.6"/><circle cx="179.42" cy="550.6" r="3.2" fill="none" stroke="#bcbaad" stroke-width="2.6"/><circle cx="193.14" cy="550.6" r="4.6" fill="#f7f6e8"/><circle cx="206.86" cy="550.6" r="3.2" fill="none" stroke="#bcbaad" stroke-width="2.6"/><circle cx="220.58" cy="550.6" r="3.2" fill="none" stroke="#bcbaad" stroke-width="2.6"/><circle cx="234.30" cy="550.6" r="3.2" fill="none" stroke="#bcbaad" stroke-width="2.6"/><circle cx="248.02" cy="550.6" r="3.2" fill="none" stroke="#bcbaad" stroke-width="2.6"/><circle cx="261.74" cy="550.6" r="3.2" fill="none" stroke="#bcbaad" stroke-width="2.6"/><circle cx="275.46" cy="550.6" r="3.2" fill="none" stroke="#bcbaad" stroke-width="2.6"/><circle cx="289.18" cy="550.6" r="3.2" fill="none" stroke="#bcbaad" stroke-width="2.6"/><circle cx="302.90" cy="550.6" r="3.2" fill="none" stroke="#bcbaad" stroke-width="2.6"/><polygon points="7.7000000000000455,539.5 14.5,534.9 14.5,544" fill="#6a6d70"/><polygon points="325,539.5 318.20000000000005,534.9 318.20000000000005,544" fill="#6a6d70"/></svg>
<div class="a kb" style="left:910.9px;top:596px">C2</div>
<div class="a kb" style="left:1008px;top:596px">C3</div>
<div class="a kb" style="left:1103.2px;top:596px">C4</div>
<div id="foot" class="a"></div>
<svg class="a" style="left:0;top:669px" width="1222" height="31"><g fill="none" stroke="#c4c6c7" stroke-width="1.2"><rect x="20.7" y="6.9" width="15.7" height="16.4"/><rect x="22.55" y="9.10" width="12.0" height="12.0" transform="rotate(20 28.55 15.1)" stroke-width="0.9"/><rect x="23.95" y="10.50" width="9.2" height="9.2" transform="rotate(45 28.55 15.1)" stroke-width="0.9"/><circle cx="28.55" cy="15.1" r="2.4" stroke-width="0.8"/></g><g fill="#c4c6c7"><rect x="28.150000000000002" y="12.7" width="0.8" height="4.8"/><rect x="26.150000000000002" y="14.7" width="4.8" height="0.8"/></g><g fill="none" stroke="#c7c8c9" stroke-width="1.8" stroke-linecap="round"><path d="M1131.6,9.4 L1138.9,16.6 Q1140.2,17.8 1141.5,16.6 L1142.6,15.5 Q1143.7,14.2 1142.5,13 L1135.2,6"/><path d="M1141,16.2 L1146.6,21.8"/><path d="M1183.5,7.9 L1198.5,22.6"/><circle cx="1188.6" cy="20.3" r="2.7"/></g><circle cx="1147.4" cy="22" r="3.2" fill="#c7c8c9"/><polygon points="1191.2,7.2 1196.8,7.2 1196.8,10.6 1192.9,10.6 1191.8,12.6 1191.2,10.6" fill="#c7c8c9"/><path d="M893.6,21.2 C895.6,17.5 896.4,9.4 898.6,9.4 C901,9.4 902,21 904.3,21 C906.3,21 907.5,13 909.3,9.6" fill="none" stroke="#cfd0d0" stroke-width="1.6" stroke-linecap="round"/></svg>
<div class="a" style="left:41.3px;top:673px;height:22px;line-height:22px;font-size:21.5px;font-weight:bold;color:#c4c6c7;white-space:nowrap;transform-origin:0 50%;transform:scaleX(1.06)">MNDALA 2</div>
<div class="a" style="left:913.4px;top:674px;height:20px;line-height:20px;font-size:17.4px;color:#cfd0d0;white-space:nowrap;letter-spacing:1px;transform-origin:0 50%;transform:scaleX(1.1)">AniMod</div>
</body></html>
